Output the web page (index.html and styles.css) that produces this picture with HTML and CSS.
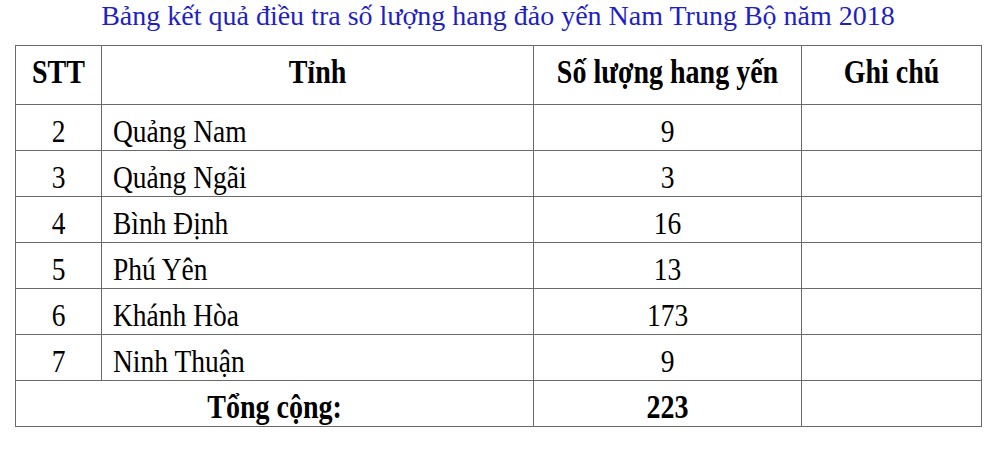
FILE: index.html
```html
<!DOCTYPE html>
<html lang="vi">
<head>
<meta charset="utf-8">
<title>Bảng kết quả</title>
<link rel="stylesheet" href="styles.css">
</head>
<body>
<div class="page">
  <h1 class="title">Bảng kết quả điều tra số lượng hang đảo yến Nam Trung Bộ năm 2018</h1>
  <table class="grid">
    <colgroup>
      <col class="c-stt">
      <col class="c-tinh">
      <col class="c-sl">
      <col class="c-gc">
    </colgroup>
    <thead>
      <tr class="head">
        <th><span class="s">STT</span></th>
        <th><span class="s">Tỉnh</span></th>
        <th><span class="s">Số lượng hang yến</span></th>
        <th><span class="s">Ghi chú</span></th>
      </tr>
    </thead>
    <tbody>
      <tr><td class="ctr"><span class="s">2</span></td><td class="name"><span class="s">Quảng Nam</span></td><td class="ctr"><span class="s">9</span></td><td></td></tr>
      <tr><td class="ctr"><span class="s">3</span></td><td class="name"><span class="s">Quảng Ngãi</span></td><td class="ctr"><span class="s">3</span></td><td></td></tr>
      <tr><td class="ctr"><span class="s">4</span></td><td class="name"><span class="s">Bình Định</span></td><td class="ctr"><span class="s">16</span></td><td></td></tr>
      <tr><td class="ctr"><span class="s">5</span></td><td class="name"><span class="s">Phú Yên</span></td><td class="ctr"><span class="s">13</span></td><td></td></tr>
      <tr><td class="ctr"><span class="s">6</span></td><td class="name"><span class="s">Khánh Hòa</span></td><td class="ctr"><span class="s">173</span></td><td></td></tr>
      <tr><td class="ctr"><span class="s">7</span></td><td class="name"><span class="s">Ninh Thuận</span></td><td class="ctr"><span class="s">9</span></td><td></td></tr>
      <tr class="total"><td class="ctr" colspan="2"><span class="s">Tổng cộng:</span></td><td class="ctr"><span class="s">223</span></td><td></td></tr>
    </tbody>
  </table>
</div>
</body>
</html>
```

FILE: styles.css
```css
html, body {
  margin: 0;
  padding: 0;
  background: #ffffff;
}

body {
  font-family: "Liberation Serif", "Times New Roman", serif;
  color: #000000;
}

.page {
  width: 966px;
  padding: 0 0 0 15px;
}

.s {
  display: inline-block;
  line-height: 1;
  transform: scaleY(1.18);
  transform-origin: 50% 100%;
  white-space: nowrap;
}

.title {
  margin: 0;
  height: 45px;
  font-size: 28px;
  line-height: 28px;
  font-weight: normal;
  color: #1f1fc6;
  text-align: center;
  white-space: nowrap;
  box-sizing: border-box;
  padding-top: 2px;
}

.grid {
  border-collapse: collapse;
  table-layout: fixed;
  width: 966px;
  font-size: 27.5px;
}

.c-stt { width: 86px; }
.c-tinh { width: 432px; }
.c-sl { width: 268px; }
.c-gc { width: 180px; }

.grid th,
.grid td {
  border: 1px solid #6a6a6a;
  padding: 0;
}

.head th {
  height: 59px;
  font-size: 28px;
  font-weight: bold;
  text-align: center;
  vertical-align: middle;
  padding-bottom: 1px;
  box-sizing: border-box;
}

.grid tbody td {
  height: 46px;
  vertical-align: bottom;
  padding-bottom: 0;
  box-sizing: border-box;
}

.grid td.ctr {
  text-align: center;
}

.grid td.name {
  text-align: left;
  padding-left: 11px;
}

.total td {
  font-size: 28px;
  font-weight: bold;
}
```
